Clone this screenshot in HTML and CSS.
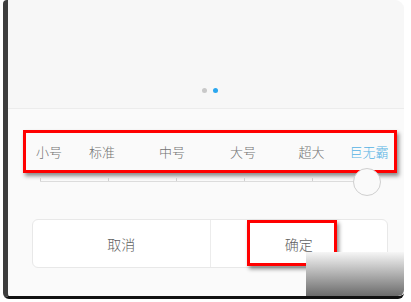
FILE: index.html
```html
<!DOCTYPE html>
<html lang="zh">
<head>
<meta charset="UTF-8">
<title>字体大小</title>
<link rel="stylesheet" href="styles.css">
</head>
<body>
<div class="pantalla">
    <div class="vista">
        <div class="puntos">
            <span class="punto"></span>
            <span class="punto activo"></span>
        </div>
    </div>

    <div class="tamanos">
        <span>小号</span>
        <span>标准</span>
        <span>中号</span>
        <span>大号</span>
        <span>超大</span>
        <span class="elegido">巨无霸</span>
    </div>

    <div class="barra">
        <div class="linea">
            <i style="left: 0px"></i>
            <i style="left: 68px"></i>
            <i style="left: 136px"></i>
            <i style="left: 204px"></i>
            <i style="left: 272px"></i>
        </div>
        <div class="tirador"></div>
    </div>

    <div class="botones">
        <button class="boton">取消</button>
        <button class="boton">确定</button>
        <div class="marca"></div>
    </div>

    <div class="sombra"></div>
</div>
</body>
</html>
```

FILE: styles.css
```css
body {
    margin: 0;
    background: #fff;
    font-family: "Noto Sans CJK SC", "Noto Sans", sans-serif;
}

/* marco del teléfono */
.pantalla {
    position: relative;
    margin-left: 3px;
    width: 396px;
    height: 296px;
    background: #fafafa;
    border-left: 5px solid #3d3d3d;
    border-bottom: 3px solid #111;
    border-radius: 4px 9px 6px 6px;
    overflow: hidden;
}

/* parte de arriba con la vista previa */
.vista {
    height: 109px;
    background: #f7f7f7;
    border-bottom: 1px solid #ececec;
    display: flex;
    flex-direction: column;
    justify-content: flex-end;
    padding-bottom: 15px;
    box-sizing: border-box;
}

.puntos {
    display: flex;
    justify-content: center;
    gap: 6px;
    padding-left: 7px;
}

.punto {
    width: 5px;
    height: 5px;
    border-radius: 50%;
    background: #c9c9c9;
}

.punto.activo {
    background: #2ba7ef;
}

/* fila de tamaños (con el recuadro rojo) */
.tamanos {
    margin: 21px 0 0 15px;
    width: 368px;
    height: 36px;
    border: 3px solid #f00;
    box-shadow: 2px 3px 4px rgba(0, 0, 0, 0.45);
    display: grid;
    grid-template-columns: 46px 60px 80px 62px 75px 40px;
    align-items: center;
    font-size: 13px;
    font-weight: 300;
    color: #727272;
    text-align: center;
    line-height: 1;
    padding-bottom: 1px;
    box-sizing: content-box;
}

.tamanos .elegido {
    color: #55b2e4;
}

/* barra deslizante */
.barra {
    position: relative;
    margin-left: 32px;
    width: 345px;
    height: 23px;
}

.linea {
    position: absolute;
    left: 0;
    right: 20px;
    top: 8px;
    height: 1px;
    background: #dcdcdc;
}

.linea i {
    position: absolute;
    top: -3px;
    width: 1px;
    height: 3px;
    background: #d0d0d0;
}

.tirador {
    position: absolute;
    left: 313px;
    top: -5px;
    width: 26px;
    height: 26px;
    border: 1px solid #cfcfcf;
    border-radius: 50%;
    background: #fafafa;
}

/* botones */
.botones {
    position: relative;
    margin: 23px 0 0 24px;
    width: 354px;
    height: 47px;
    display: flex;
    background: #fff;
    border: 1px solid #e8e8e8;
    border-radius: 6px;
}

.boton {
    flex: 1;
    border: none;
    background: transparent;
    font-family: "Noto Sans CJK SC", sans-serif;
    font-size: 14px;
    font-weight: 300;
    color: #626262;
    padding: 0;
}

.boton + .boton {
    border-left: 1px solid #ececec;
}

.marca {
    position: absolute;
    left: 214px;
    top: 0;
    width: 84px;
    height: 40px;
    border: 3px solid #f00;
    box-shadow: 2px 3px 4px rgba(0, 0, 0, 0.45);
}

/* esquina oscurecida abajo a la derecha */
.sombra {
    position: absolute;
    right: 0;
    bottom: 0;
    width: 98px;
    height: 44px;
    background: linear-gradient(to bottom, #f6f6f6, #6b6b6b);
    border-radius: 0 0 6px 0;
}
```
